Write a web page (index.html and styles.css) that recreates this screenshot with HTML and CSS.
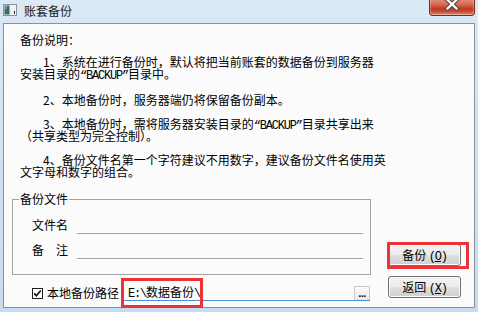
FILE: index.html
```html
<!DOCTYPE html>
<html lang="zh-CN">
<head>
<meta charset="utf-8">
<title>账套备份</title>
<link rel="stylesheet" href="styles.css">
</head>
<body>
<div class="window">
  <div class="titlebar">
    <svg class="app-icon" viewBox="0 0 14 12" width="14" height="12">
      <rect x="0.5" y="0.5" width="13" height="11" fill="#eef2f5" stroke="#8592a0"/>
      <rect x="1.5" y="1.5" width="5" height="9" fill="#3d6b66"/>
      <rect x="2" y="2" width="2" height="3" fill="#6f9a92"/>
      <rect x="11" y="7" width="1" height="3" fill="#2a2a2a"/>
    </svg>
    <span class="title">账套备份</span>
    <div class="close-btn">
      <svg viewBox="0 0 44 15" width="44" height="15">
        <path d="M17.5 0 L26.5 8.5 M26.5 0 L17.5 8.5" stroke="#4e4e4e" stroke-width="4.4" stroke-linecap="square" fill="none"/>
        <path d="M17.5 0 L26.5 8.5 M26.5 0 L17.5 8.5" stroke="#ffffff" stroke-width="2.2" stroke-linecap="square" fill="none"/>
      </svg>
    </div>
  </div>
  <div class="client">
    <div class="notes">
      <div class="line">备份说明：</div>
      <div class="para para-first">
        <div class="line indent">1、系统在进行备份时，默认将把当前账套的数据备份到服务器</div>
        <div class="line">安装目录的<span class="asc">“BACKUP”</span>目录中。</div>
      </div>
      <div class="para para-loose">
        <div class="line indent">2、本地备份时，服务器端仍将保留备份副本。</div>
      </div>
      <div class="para">
        <div class="line indent">3、本地备份时，需将服务器安装目录的<span class="asc">“BACKUP”</span>目录共享出来</div>
        <div class="line">（共享类型为完全控制）。</div>
      </div>
      <div class="para">
        <div class="line indent">4、备份文件名第一个字符建议不用数字，建议备份文件名使用英</div>
        <div class="line">文字母和数字的组合。</div>
      </div>
    </div>
    <div class="lower">
      <div class="left-col">
        <fieldset class="group">
          <legend class="group-label">备份文件</legend>
          <div class="field-row"><span class="field-label">文件名</span><span class="field-line"></span></div>
          <div class="field-row field-row-2"><span class="field-label">备　注</span><span class="field-line"></span></div>
        </fieldset>
        <div class="path-row">
          <span class="checkbox">
            <svg viewBox="0 0 9 9" width="9" height="9"><path d="M1.2 4.4 L3.4 6.8 L7.8 1.6" stroke="#111" stroke-width="1.6" fill="none"/></svg>
          </span>
          <span class="path-label">本地备份路径</span>
          <div class="path-field">
            <span class="path-text"><span class="asc">E:\</span>数据备份<span class="asc">\</span></span>
            <span class="browse">...</span>
            <div class="annot annot-path"></div>
          </div>
        </div>
      </div>
      <div class="buttons">
        <div class="btn-wrap">
          <button class="btn" type="button">备份 <span class="asc">(<u>O</u>)</span></button>
          <div class="annot annot-btn"></div>
        </div>
        <button class="btn" type="button">返回 <span class="asc">(<u>X</u>)</span></button>
      </div>
    </div>
  </div>
</div>
</body>
</html>
```

FILE: styles.css
```css
html, body {
  margin: 0;
  padding: 0;
}

.window {
  width: 478px;
  height: 312px;
  overflow: hidden;
  display: flex;
  flex-direction: column;
  background: linear-gradient(#dbe8f6, #c8dbef);
  font-family: "Noto Sans CJK SC", "Noto Sans", sans-serif;
  font-size: 12px;
  color: #000;
}

.titlebar {
  flex: none;
  height: 23px;
  display: flex;
  align-items: flex-start;
}

.app-icon {
  display: block;
  margin: 4px 0 0 3px;
}

.title {
  margin-left: 7px;
  line-height: 22px;
  font-size: 12px;
  color: #1b1b1b;
}

.close-btn {
  margin-left: auto;
  margin-right: 3px;
  width: 46px;
  height: 16px;
  box-sizing: border-box;
  border: 1px solid #7c2a1e;
  border-top: none;
  border-radius: 0 0 4px 4px;
  background: linear-gradient(#df8a74 0%, #d3634a 35%, #bf3a21 58%, #c8482d 75%, #de8a72 100%);
  box-shadow: inset 0 -1px 0 rgba(255, 255, 255, 0.35), inset 1px 0 0 rgba(255, 255, 255, 0.25), inset -1px 0 0 rgba(255, 255, 255, 0.25);
}

.close-btn svg {
  display: block;
}

.client {
  flex: none;
  height: 285px;
  margin: 0 3px;
  box-sizing: border-box;
  border: 1px solid #8393a6;
  background: #fbfbfb;
}

.notes {
  padding: 10px 0 0 16px;
}

.line {
  height: 12px;
  line-height: 12px;
  white-space: nowrap;
}

.indent {
  padding-left: 23px;
}

.para {
  margin-top: 12px;
}

.para-first {
  margin-top: 10px;
}

.para-loose {
  margin-top: 14px;
}

.asc {
  font-family: "Liberation Mono", "DejaVu Sans Mono", monospace;
  font-size: 12px;
  letter-spacing: -1.2px;
}

.lower {
  display: flex;
  align-items: flex-end;
  margin-top: 15px;
}

.left-col {
  width: 366px;
  flex: none;
}

.group {
  margin: 0 0 0 8px;
  width: 359px;
  box-sizing: border-box;
  border: 1px solid #a3a3a3;
  padding: 11px 7px 15px 7px;
  min-width: 0;
}

.group-label {
  padding: 0 1px;
  margin-left: -1px;
  line-height: 12px;
  height: 12px;
}

.field-row {
  display: flex;
  height: 18px;
  margin-left: 12px;
}

.field-row-2 {
  margin-top: 7px;
}

.field-label {
  width: 45px;
  flex: none;
  line-height: 18px;
  white-space: nowrap;
}

.field-line {
  flex: 1;
  border-bottom: 1px solid #a3a3a3;
}

.path-row {
  display: flex;
  align-items: center;
  height: 16px;
  margin-top: 10px;
  padding-left: 28px;
}

.checkbox {
  width: 11px;
  height: 11px;
  flex: none;
  box-sizing: border-box;
  border: 1px solid #1e1e1e;
  background: #fff;
  display: flex;
  align-items: center;
  justify-content: center;
}

.checkbox svg {
  display: block;
}

.path-label {
  margin-left: 4px;
  width: 72px;
  flex: none;
  white-space: nowrap;
  line-height: 16px;
}

.path-field {
  position: relative;
  flex: 1;
  margin-left: 5px;
  height: 16px;
  box-sizing: border-box;
  border-bottom: 1px solid #4a8fdc;
  display: flex;
  align-items: flex-end;
}

.path-text {
  align-self: center;
  padding-left: 4px;
  line-height: 15px;
  white-space: nowrap;
}

.browse {
  margin-left: auto;
  width: 16px;
  height: 14px;
  box-sizing: border-box;
  border: 1px solid #c9c9c9;
  border-bottom: none;
  background: linear-gradient(#fafafa, #e9e9e9);
  font-family: "Liberation Sans", sans-serif;
  font-weight: bold;
  font-size: 11px;
  line-height: 12px;
  text-align: center;
  letter-spacing: -0.5px;
  color: #111;
}

.annot {
  position: absolute;
  box-sizing: border-box;
  border: 3px solid #ec3337;
  pointer-events: none;
}

.annot-path {
  left: -3px;
  top: -7px;
  width: 82px;
  height: 30px;
}

.buttons {
  flex: none;
  margin-left: 18px;
  margin-bottom: 3px;
  display: flex;
  flex-direction: column;
  gap: 10px;
}

.btn-wrap {
  position: relative;
}

.annot-btn {
  left: -1px;
  top: -2px;
  width: 82px;
  height: 27px;
}

.btn {
  display: block;
  width: 73px;
  height: 22px;
  margin: 0;
  padding: 0;
  box-sizing: border-box;
  border: 1px solid #707070;
  border-radius: 3px;
  background: linear-gradient(#f3f3f3 0%, #ececec 48%, #dedede 52%, #d0d0d0 100%);
  box-shadow: inset 0 0 0 1px #fbfbfb;
  font-family: "Noto Sans CJK SC", "Noto Sans", sans-serif;
  font-size: 12px;
  line-height: 20px;
  color: #000;
  text-align: center;
  white-space: nowrap;
}
```
